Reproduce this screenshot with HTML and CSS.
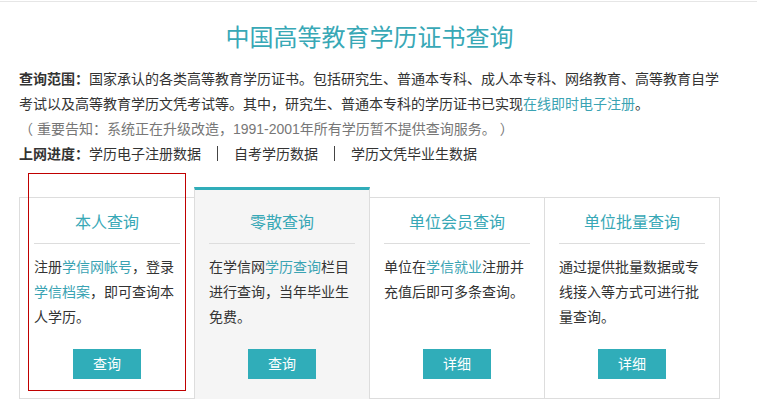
FILE: index.html
```html
<!DOCTYPE html>
<html lang="zh-CN">
<head>
    <meta charset="UTF-8">
    <title>中国高等教育学历证书查询</title>
    <link rel="stylesheet" href="styles.css">
</head>
<body>
<div class="page">
    <h1 class="title">中国高等教育学历证书查询</h1>

    <div class="intro">
        <p><b>查询范围：</b>国家承认的各类高等教育学历证书。包括研究生、普通本专科、成人本专科、网络教育、高等教育自学考试以及高等教育学历文凭考试等。其中，研究生、普通本专科的学历证书已实现<a href="#">在线即时电子注册</a>。</p>
        <p class="notice">（ 重要告知：系统正在升级改造，1991-2001年所有学历暂不提供查询服务。 ）</p>
        <p><b>上网进度：</b>学历电子注册数据<span class="sep"></span>自考学历数据<span class="sep"></span>学历文凭毕业生数据</p>
    </div>

    <div class="cards">
        <div class="card mine">
            <h3>本人查询</h3>
            <p>注册<a href="#">学信网帐号</a>，登录<a href="#">学信档案</a>，即可查询本人学历。</p>
            <a class="btn" href="#">查询</a>
            <!-- annotation box -->
            <div class="mark"></div>
        </div>
        <div class="card active">
            <h3>零散查询</h3>
            <p>在学信网<a href="#">学历查询</a>栏目进行查询，当年毕业生免费。</p>
            <a class="btn" href="#">查询</a>
        </div>
        <div class="card">
            <h3>单位会员查询</h3>
            <p>单位在<a href="#">学信就业</a>注册并充值后即可多条查询。</p>
            <a class="btn" href="#">详细</a>
        </div>
        <div class="card">
            <h3>单位批量查询</h3>
            <p>通过提供批量数据或专线接入等方式可进行批量查询。</p>
            <a class="btn" href="#">详细</a>
        </div>
    </div>
</div>
</body>
</html>
```

FILE: styles.css
```css
body {
    margin: 0;
    padding-top: 1px;
    font-family: "Liberation Sans", "Noto Sans CJK SC", sans-serif;
    font-size: 14px;
    color: #333;
    background-color: #fff;
    overflow: hidden;
}

.page {
    border-top: 1px solid #e6e6e6;
    padding-left: 19px;
}

.title {
    margin: 18px 0 11px;
    width: 701px;
    font-size: 24px;
    font-weight: normal;
    line-height: 36px;
    color: #38a8b6;
    text-align: center;
}

.intro {
    width: 701px;
}

.intro p {
    margin: 0;
    line-height: 25px;
}

.intro b {
    font-weight: bold;
}

.intro a, .card a {
    color: #3aa3b3;
    text-decoration: none;
}

.notice {
    color: #777;
}

.sep {
    display: inline-block;
    width: 1px;
    height: 15px;
    margin: 0 16px;
    background-color: #444;
    vertical-align: -2px;
}

.cards {
    display: flex;
    width: 700px;
    margin-top: 30px;
    border: 1px solid #ddd;
    border-right: none;
}

.card {
    position: relative;
    width: 175px;
    box-sizing: border-box;
    padding: 14px 14px 19px;
    border-right: 1px solid #ddd;
    display: flex;
    flex-direction: column;
}

.card h3 {
    margin: 0;
    padding-bottom: 9px;
    border-bottom: 1px solid #ddd;
    font-size: 16px;
    font-weight: normal;
    line-height: 22px;
    color: #38a8b6;
    text-align: center;
}

.card p {
    margin: 11px 0 0;
    height: 75px;
    line-height: 25px;
}

.card .btn {
    align-self: center;
    margin-top: 19px;
    width: 68px;
    height: 30px;
    line-height: 30px;
    background-color: #30adb9;
    color: #fff;
    font-size: 14px;
    text-align: center;
}

.card.active {
    margin: -11px 0 -12px -1px;
    width: 176px;
    padding-top: 22px;
    background-color: #f5f5f5;
    border-top: 3px solid #30adb9;
    border-left: 1px solid #ddd;
}

.mark {
    position: absolute;
    left: 8px;
    top: -25px;
    width: 156px;
    height: 216px;
    border: 1px solid #c00000;
    pointer-events: none;
}
```
